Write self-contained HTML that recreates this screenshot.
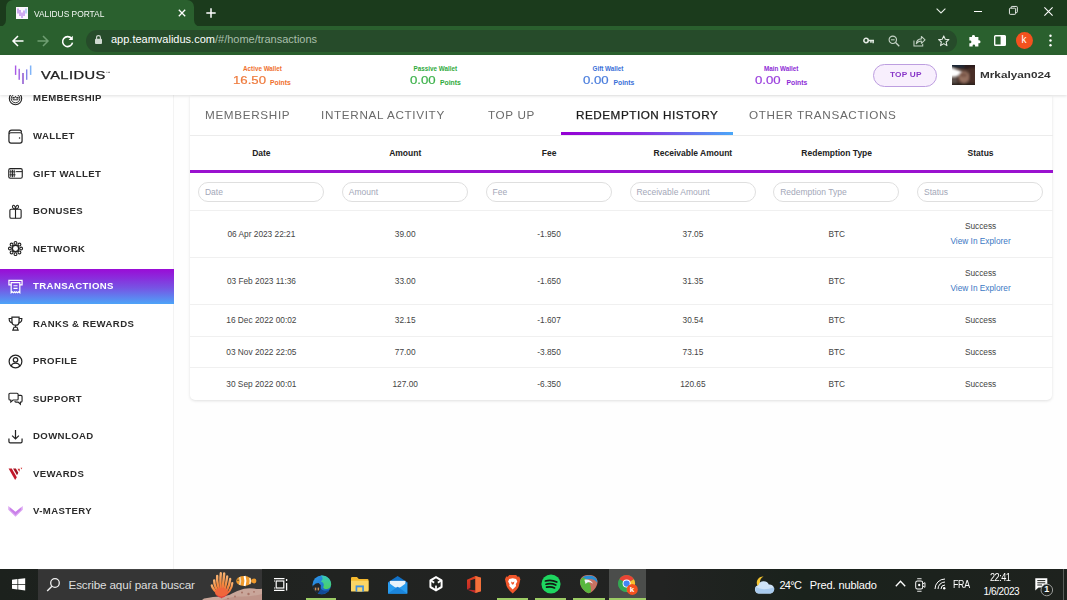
<!DOCTYPE html>
<html><head><meta charset="utf-8"><title>VALIDUS PORTAL</title>
<style>
*{box-sizing:border-box;margin:0;padding:0}
html,body{width:1067px;height:600px;overflow:hidden;background:#fefefe;font-family:"Liberation Sans",sans-serif;}
.abs{position:absolute}
#tabstrip{position:absolute;left:0;top:0;width:1067px;height:27px;background:#1b3b1c}
#tab{position:absolute;left:6px;top:0;width:188px;height:27px;background:#2a602e;border-radius:7px 7px 0 0}
#tab .t{position:absolute;left:28px;top:6px;font-size:10.5px;color:#fff;white-space:nowrap}
#toolbar{position:absolute;left:0;top:26px;width:1067px;height:29px;background:#2a602e}
#url{position:absolute;left:86px;top:3.500px;width:871px;height:22px;border-radius:11px;background:#264b2a}
#url .u{position:absolute;left:24px;top:3px;font-size:11.5px;color:#fff;white-space:nowrap}
#url .u span{color:#a9bfaa}
#apphead{position:absolute;left:0;top:55px;width:1067px;height:39.5px;background:#fff;box-shadow:0 1px 3px rgba(0,0,0,.13);z-index:5}
#side{position:absolute;left:0;top:55px;width:174px;height:514px;background:#fff;border-right:1px solid #f3f3f3}
.mi{position:absolute;left:0;width:174px;height:36px}
.mi .l{position:absolute;left:33px;top:12px;font-size:9px;font-weight:bold;letter-spacing:.9px;color:#2c2c2c;white-space:nowrap}
.mi.act{background:linear-gradient(180deg,#9a0cd6 0%,#8a2cdc 25%,#7655e4 55%,#4da4f8 100%)}
.mi.act .l{color:#fff}
#card{position:absolute;left:189.5px;top:96px;width:862.500px;height:303.5px;background:#fff;border-radius:0 0 5px 5px;box-shadow:0 1px 3px rgba(0,0,0,.12)}
#taskbar{position:absolute;left:0;top:569px;width:1067px;height:31px;background:#1f2420;z-index:9}

.mi{height:35px}
.mi .ic{position:absolute;left:7.8px;top:10px;width:15px;height:15px;overflow:visible}
.mi .l{top:12.5px}

.mi .l{font-size:9px;letter-spacing:.37px;transform:scaleX(1.065);transform-origin:0 50%}
.w{position:absolute;white-space:nowrap;font-weight:bold}
.wl{font-size:6.3px;top:9.5px;transform-origin:0 50%}
.wv{font-size:11px;top:19.3px;font-weight:normal;-webkit-text-stroke:.2px currentColor;transform-origin:0 50%;transform:scaleX(1.2)}
.wp{font-size:6.8px;top:24.4px}
#topup{position:absolute;left:873px;top:9px;width:64px;height:23px;border:1px solid #bd9ee0;border-radius:12px;background:#f8effd}
#topup span{position:absolute;left:16px;top:5px;font-size:7.5px;font-weight:bold;color:#8836c8;letter-spacing:.2px;white-space:nowrap;transform:scaleX(1.1);transform-origin:0 50%}
#ava{position:absolute;left:952px;top:10px;width:23px;height:20px}
#uname{position:absolute;left:980px;top:14px;font-size:9.8px;font-weight:bold;color:#333;white-space:nowrap;transform:scaleX(1.2);transform-origin:0 50%}
#logo{position:absolute;left:14px;top:10px;width:18px;height:20px}
#logot{position:absolute;left:41px;top:14.500px;font-size:10.2px;color:#222;letter-spacing:.3px;transform:scaleX(1.44);transform-origin:0 50%;white-space:nowrap;-webkit-text-stroke:.25px #222}

.tb{position:absolute;top:12.5px;font-size:10.7px;color:#6a6a6a;white-space:nowrap;letter-spacing:.6px;transform-origin:0 50%;transform:scaleX(1.095)}
.tb.on{color:#1c1c1c;-webkit-text-stroke:.25px #1c1c1c;letter-spacing:.48px}
#tul{position:absolute;left:371.3px;top:36px;width:172.5px;height:3px;background:linear-gradient(90deg,#9400d3 0%,#8a2be2 45%,#4aa8f8 100%)}
#tsep{position:absolute;left:0;top:39px;width:863px;height:1px;background:#ececec}
#thl{position:absolute;left:0;top:74px;width:863px;height:3px;background:#9a12cf}
.th{position:absolute;top:52px;width:143.8px;text-align:center;font-size:8.5px;font-weight:bold;color:#222;white-space:nowrap}
.fi{position:absolute;top:86px;width:126px;height:20px;border:1px solid #dfdfdf;border-radius:10px;background:#fff}
.fi span{position:absolute;left:5.800px;top:4px;font-size:8.5px;color:#a3a7b8;white-space:nowrap}
.hr{position:absolute;left:0;width:863px;height:1px;background:#f0f0f0}
.td{position:absolute;width:143.8px;text-align:center;font-size:8.3px;color:#444;margin-top:0;white-space:nowrap;line-height:10px}
.td a{color:#3b78c4;text-decoration:none}

#taskbar{background:linear-gradient(90deg,#1c211d 0%,#212321 30%,#222322 62%,#1a221c 75%,#1e221e 100%);top:569px;height:31px}
#tsearch{position:absolute;left:37.500px;top:0;width:224.500px;height:31px;background:#353535;overflow:hidden;box-shadow:inset 0 1px 0 #444}
#tsearch .tx{position:absolute;left:31px;top:8.5px;font-size:11.7px;color:#dedede;white-space:nowrap;letter-spacing:-.15px}
.ul{position:absolute;top:29px;height:2px;background:#9ccc65}
.tt{position:absolute;color:#fff;white-space:nowrap;font-size:11px}
.tsv{position:absolute;overflow:visible}

#tab .t{left:28px;top:7.5px;font-size:9.700px;transform:scaleX(.865);transform-origin:0 50%;color:#f4f8f4}
#url .u{left:25px;top:3.5px;font-size:11px}
.cv{position:absolute;overflow:visible}
</style></head>
<body>
<div id="tabstrip"><div id="tab">
<svg class="cv" style="left:-7px;top:20px" width="7" height="7" viewBox="0 0 7 7"><path d="M7 0 V7 H0 A7 7 0 0 0 7 0Z" fill="#2a602e"/></svg>
<svg class="cv" style="left:188px;top:20px" width="7" height="7" viewBox="0 0 7 7"><path d="M0 0 V7 H7 A7 7 0 0 1 0 0Z" fill="#2a602e"/></svg>
<svg class="cv" style="left:10px;top:7px" width="12" height="12" viewBox="0 0 12 12"><rect width="12" height="12" fill="#fbf8fe"/><path d="M2 1.500 V6.500 M4 3 V9 M6 5.500 V11 M8 3.500 V9" stroke="#9a4fe0" stroke-width=".9"/><path d="M10 1.500 V6.500" stroke="#6aa0f0" stroke-width=".9"/></svg>
<div class="t">VALIDUS PORTAL</div>
<svg class="cv" style="left:171.500px;top:9px" width="8" height="8" viewBox="0 0 8 8"><path d="M.8 .8 L7.200 7.200 M7.200 .8 L.8 7.200" stroke="#fff" stroke-width="1.300"/></svg>
</div>
<svg class="cv" style="left:205.500px;top:8px" width="10" height="10" viewBox="0 0 10 10"><path d="M5 .3 V9.700 M.3 5 H9.700" stroke="#fff" stroke-width="1.500"/></svg>
<svg class="cv" style="left:936px;top:8px" width="10" height="6" viewBox="0 0 10 6"><path d="M.6 .6 L5 5 L9.400 .6" fill="none" stroke="#e8efe8" stroke-width="1.100"/></svg>
<svg class="cv" style="left:973.500px;top:10.500px" width="8" height="1" viewBox="0 0 8 1"><rect width="8" height="1" fill="#fff"/></svg>
<svg class="cv" style="left:1008.500px;top:6.300px" width="8.800" height="8.800" viewBox="0 0 10 10"><rect x=".5" y="2.500" width="7" height="7" rx="1" fill="none" stroke="#fff" stroke-width="1"/><path d="M2.500 2.500 V1.500 Q2.500 .5 3.500 .5 H8.500 Q9.500 .5 9.500 1.500 V6.500 Q9.500 7.500 8.500 7.500 H7.500" fill="none" stroke="#fff" stroke-width="1"/></svg>
<svg class="cv" style="left:1044px;top:6.500px" width="9" height="9" viewBox="0 0 9 9"><path d="M.4 .4 L8.600 8.600 M8.600 .4 L.4 8.600" stroke="#fff" stroke-width="1.100"/></svg>
</div>
<div id="toolbar">
<svg class="cv" style="left:12px;top:9px" width="12" height="12" viewBox="0 0 12 12"><path d="M11.500 6 H1.500 M6 1 L1 6 L6 11" fill="none" stroke="#fff" stroke-width="1.500"/></svg>
<svg class="cv" style="left:37px;top:9px" width="12" height="12" viewBox="0 0 12 12"><path d="M.5 6 H10.500 M6 1 L11 6 L6 11" fill="none" stroke="#6f9e72" stroke-width="1.500"/></svg>
<svg class="cv" style="left:61px;top:8.500px" width="13" height="13" viewBox="0 0 13 13"><path d="M10.600 3.600 A5 5 0 1 0 11.500 7.600" fill="none" stroke="#fff" stroke-width="1.600"/><path d="M11.800 .8 V5 H7.600Z" fill="#fff"/></svg>
<div id="url">
<svg class="cv" style="left:9.200px;top:5.600px" width="7" height="9" viewBox="0 0 8 10"><rect x="0" y="4" width="8" height="6" rx="1" fill="#cfd8d0"/><path d="M1.800 4.500 V2.800 A2.200 2.200 0 0 1 6.200 2.800 V4.500" fill="none" stroke="#cfd8d0" stroke-width="1.300"/></svg>
<div class="u">app.teamvalidus.com<span>/#/home/transactions</span></div>
<svg class="cv" style="left:777px;top:7.500px" width="11.500" height="7" viewBox="0 0 13 8"><circle cx="3.400" cy="4" r="2.500" fill="none" stroke="#e4ebe4" stroke-width="1.800"/><path d="M6 4 H12.500 M11.500 4 V7 M9 4 V6.500" stroke="#e4ebe4" stroke-width="1.700"/></svg>
<svg class="cv" style="left:801.500px;top:5.500px" width="12" height="12" viewBox="0 0 13 13"><circle cx="5.200" cy="5.200" r="4" fill="none" stroke="#c6d4c7" stroke-width="1.200"/><path d="M8.200 8.200 L12.200 12.200" stroke="#c6d4c7" stroke-width="1.400"/><path d="M3.200 5.200 H7.200" stroke="#c6d4c7" stroke-width="1.100"/></svg>
<svg class="cv" style="left:826.500px;top:5px" width="13" height="12" viewBox="0 0 14 13"><path d="M1 6 V12 H10.500 V9.500" fill="none" stroke="#c6d4c7" stroke-width="1.100"/><path d="M3.500 9.500 Q4 4.500 9 4.200 V1.500 L13 5.300 L9 9 V6.400 Q5.500 6.400 3.500 9.500Z" fill="none" stroke="#c6d4c7" stroke-width="1.100" stroke-linejoin="round"/></svg>
<svg class="cv" style="left:852px;top:5.500px" width="11.500" height="11.500" viewBox="0 0 13 13"><path d="M6.500 1 L8.200 4.800 L12.300 5.200 L9.200 7.900 L10.100 12 L6.500 9.800 L2.900 12 L3.800 7.900 L.7 5.200 L4.800 4.800Z" fill="none" stroke="#e4ebe4" stroke-width="1.200" stroke-linejoin="round"/></svg>
</div>
<svg class="cv" style="left:969px;top:8.500px" width="11.500" height="11.500" viewBox="0 0 13 13"><path d="M5 0 Q6.800 0 6.800 1.600 V2.400 H10.600 V6 H11.400 Q13 6 13 7.700 Q13 9.400 11.400 9.400 H10.600 V13 H6.900 V12 Q6.900 10.600 5.500 10.600 Q4.100 10.600 4.100 12 V13 H.4 V9.300 H1.300 Q2.700 9.300 2.700 7.800 Q2.700 6.300 1.300 6.300 H.4 V2.400 H3.300 V1.600 Q3.300 0 5 0Z" fill="#fff"/></svg>
<svg class="cv" style="left:994px;top:9px" width="12" height="11" viewBox="0 0 12 11"><rect x=".7" y=".7" width="10.600" height="9.600" rx=".8" fill="none" stroke="#fff" stroke-width="1.400"/><rect x="6.600" y=".7" width="4.700" height="9.600" fill="#fff"/></svg>
<div class="abs" style="left:1015.700px;top:5.500px;width:17.600px;height:17.600px;border-radius:50%;background:#f4511e"></div>
<div class="abs" style="left:1021.500px;top:8px;font-size:10px;color:#fff">k</div>
<svg class="cv" style="left:1049px;top:8px" width="3" height="13" viewBox="0 0 3 13"><circle cx="1.500" cy="1.800" r="1.200" fill="#fff"/><circle cx="1.500" cy="6.500" r="1.200" fill="#fff"/><circle cx="1.500" cy="11.200" r="1.200" fill="#fff"/></svg>
</div>
<div id="side">
<div class="mi" style="top:25.5px"><svg class="ic" viewBox="0 0 16 16"><circle cx="8" cy="8" r="6.6" fill="none" stroke="#222" stroke-width="1.2"/><circle cx="8" cy="8" r="4.6" fill="none" stroke="#222" stroke-width="1"/><path d="M5.6 9.4 L5.2 6.4 L6.9 7.6 L8 5.6 L9.1 7.6 L10.8 6.4 L10.4 9.4 Z" fill="none" stroke="#222" stroke-width="1"/></svg><div class="l">MEMBERSHIP</div></div>
<div class="mi" style="top:63.5px"><svg class="ic" viewBox="0 0 16 16"><path d="M1 5 Q1 1.200 4 1.200 H12.200 Q14.300 1.200 14.300 3.200 V4" fill="none" stroke="#222" stroke-width="1.300"/><rect x="1" y="4" width="14" height="11" rx="2.200" fill="none" stroke="#222" stroke-width="1.300"/><circle cx="12.300" cy="9.600" r=".8" fill="#222"/></svg><div class="l">WALLET</div></div>
<div class="mi" style="top:101.0px"><svg class="ic" viewBox="0 0 16 16"><rect x=".8" y="2.8" width="14.4" height="10.2" rx="1.6" fill="none" stroke="#222" stroke-width="1.2"/><path d="M8.6 6 H15" stroke="#222" stroke-width="1.1"/><path d="M1.6 6.2 H8 M1.6 9.4 H8 M3 4 V12 M4.8 4 V12 M6.6 4 V12" stroke="#222" stroke-width="1"/></svg><div class="l">GIFT WALLET</div></div>
<div class="mi" style="top:138.5px"><svg class="ic" viewBox="0 0 16 16"><rect x="2" y="5.6" width="12" height="9.6" rx="1.4" fill="none" stroke="#222" stroke-width="1.2"/><path d="M8 5.6 V15.2" stroke="#222" stroke-width="1.2"/><path d="M8 5.4 C5.2 5.2 4.2 3.4 5 2 C6 .6 7.8 1.8 8 5.4 C8.2 1.8 10 .6 11 2 C11.8 3.4 10.8 5.2 8 5.4Z" fill="none" stroke="#222" stroke-width="1.1"/></svg><div class="l">BONUSES</div></div>
<div class="mi" style="top:176.0px"><svg class="ic" viewBox="0 0 16 16"><circle cx="8" cy="8" r="3.4" fill="none" stroke="#222" stroke-width="1.5"/><g fill="#fff" stroke="#222" stroke-width="1.2"><circle cx="8" cy="2" r="1.5"/><circle cx="8" cy="14" r="1.5"/><circle cx="2" cy="8" r="1.5"/><circle cx="14" cy="8" r="1.5"/><circle cx="3.8" cy="3.8" r="1.5"/><circle cx="12.2" cy="3.8" r="1.5"/><circle cx="3.8" cy="12.2" r="1.5"/><circle cx="12.2" cy="12.2" r="1.5"/></g></svg><div class="l">NETWORK</div></div>
<div class="mi act" style="top:213.5px"><svg class="ic" viewBox="0 0 16 16"><path d="M3.4 6.2 H1 V1.4 H15 V6.2 H12.6" fill="none" stroke="#fff" stroke-width="1.3"/><path d="M3.4 3.8 H12.6 V14.6 L11.4 13.6 L10.2 14.6 L9 13.6 L8 14.6 L7 13.6 L5.8 14.6 L4.6 13.6 L3.4 14.6 Z" fill="none" stroke="#fff" stroke-width="1.3"/><path d="M5.8 7.2 H10.2 M5.8 10 H10.2" stroke="#fff" stroke-width="1.3"/></svg><div class="l">TRANSACTIONS</div></div>
<div class="mi" style="top:251.0px"><svg class="ic" viewBox="0 0 16 16"><path d="M4.2 1.2 H11.8 V6 Q11.8 9.8 8 9.8 Q4.2 9.8 4.2 6 Z" fill="none" stroke="#222" stroke-width="1.3"/><path d="M4.2 2.6 H1.2 Q1.2 7 4.8 7.4 M11.8 2.6 H14.8 Q14.8 7 11.2 7.4" fill="none" stroke="#222" stroke-width="1.2"/><path d="M8 9.8 V12" stroke="#222" stroke-width="1.3"/><path d="M5.2 15 L6.4 12 H9.6 L10.8 15 Z" fill="none" stroke="#222" stroke-width="1.2"/></svg><div class="l">RANKS & REWARDS</div></div>
<div class="mi" style="top:288.5px"><svg class="ic" viewBox="0 0 16 16"><circle cx="8" cy="8" r="6.8" fill="none" stroke="#222" stroke-width="1.3"/><circle cx="8" cy="6.2" r="2.4" fill="none" stroke="#222" stroke-width="1.3"/><path d="M3.6 13 Q4 9.8 8 9.8 Q12 9.8 12.4 13" fill="none" stroke="#222" stroke-width="1.3"/></svg><div class="l">PROFILE</div></div>
<div class="mi" style="top:326.0px"><svg class="ic" viewBox="0 0 16 16"><path d="M1 3.6 Q1 2.4 2.2 2.4 H9.6 Q10.8 2.4 10.8 3.6 V8.4 Q10.8 9.6 9.6 9.6 H5.4 L3 11.8 V9.6 H2.2 Q1 9.6 1 8.4 Z" fill="none" stroke="#222" stroke-width="1.2"/><path d="M10.8 4.6 H13.8 Q15 4.6 15 5.8 V10.6 Q15 11.8 13.8 11.8 H13.2 V14 L10.8 11.8 H8.4 Q7.4 11.8 7.2 10.8" fill="none" stroke="#222" stroke-width="1.2"/></svg><div class="l">SUPPORT</div></div>
<div class="mi" style="top:363.5px"><svg class="ic" viewBox="0 0 16 16"><path d="M8 1 V10.4 M4.4 7 L8 10.6 L11.6 7" fill="none" stroke="#222" stroke-width="1.3"/><path d="M1 10 V13.4 Q1 14.8 2.4 14.8 H13.6 Q15 14.8 15 13.4 V10" fill="none" stroke="#222" stroke-width="1.3"/></svg><div class="l">DOWNLOAD</div></div>
<div class="mi" style="top:401.0px"><svg class="ic" viewBox="0 0 16 16"><path d="M.6 2.6 L4 2.6 L9.4 12 L7.6 15 Z" fill="#c2182b"/><path d="M5.4 2.6 L8.4 2.6 L11 7.2 L9.6 9.8 Z" fill="#a01322"/><path d="M10.2 2.8 L12.6 2.8 L12.4 6 L11.4 5 Z" fill="#d32f2f"/><path d="M13.4 1.8 L15.2 1.8 L14.4 3.8 Z" fill="#d32f2f"/></svg><div class="l">VEWARDS</div></div>
<div class="mi" style="top:438.5px"><svg class="ic" viewBox="0 0 16 16"><path d="M.3 2.200 L8 8.300 L15.700 2.200 L15.700 6.200 L8 13.500 L.3 6.200Z" fill="#dba6f2"/><path d="M2.200 3.800 L8 8.600 L13.800 3.800 L13.800 6.400 L8 11.800 L2.200 6.400Z" fill="#c77ae8" opacity=".85"/></svg><div class="l">V-MASTERY</div></div>
</div>
<div id="apphead">
<svg id="logo" viewBox="0 0 18 20"><defs><linearGradient id="lg" x1="0" y1="0" x2="1" y2="1"><stop offset="0" stop-color="#a64de8"/><stop offset="1" stop-color="#5aa6f5"/></linearGradient></defs>
<rect x=".9" y=".5" width="1.400" height="9.400" fill="#a95ae6"/><rect x="4.500" y="3.800" width="1.400" height="11" fill="#a060e4"/><rect x="8.300" y="8" width="1.400" height="11" fill="#8448cc"/><rect x="12" y="4.400" width="1.400" height="10.400" fill="#8484ec"/><rect x="15.900" y=".5" width="1.500" height="9.400" fill="#7fb4f8"/></svg>
<div id="logot">VALIDUS<span style="font-size:3.500px;vertical-align:top;position:relative;top:1.500px;-webkit-text-stroke:0">™</span></div>
<div class="w wl" style="left:243px;color:#f0702e">Active Wallet</div><div class="w wv" style="left:233px;color:#ee7a3c">16.50</div><div class="w wp" style="left:270px;color:#f0702e">Points</div>
<div class="w wl" style="left:413.5px;color:#2eaa3c">Passive Wallet</div><div class="w wv" style="left:409.5px;color:#3cb14a">0.00</div><div class="w wp" style="left:440px;color:#2eaa3c">Points</div>
<div class="w wl" style="left:592.5px;color:#3a6fd8">Gift Wallet</div><div class="w wv" style="left:582.5px;color:#4a7ddc">0.00</div><div class="w wp" style="left:613.5px;color:#3a6fd8">Points</div>
<div class="w wl" style="left:764px;color:#8d2bd6">Main Wallet</div><div class="w wv" style="left:755px;color:#9a3fdc">0.00</div><div class="w wp" style="left:786.5px;color:#8d2bd6">Points</div>
<div id="topup"><span>TOP UP</span></div>
<svg id="ava" viewBox="0 0 23 20" preserveAspectRatio="none"><defs><filter id="bl" x="-20%" y="-20%" width="140%" height="140%"><feGaussianBlur stdDeviation="1.1"/></filter><clipPath id="avc"><rect width="23" height="20"/></clipPath></defs><g clip-path="url(#avc)"><rect width="23" height="20" fill="#4a342c"/><g filter="url(#bl)"><rect x="-2" y="-2" width="27" height="5" fill="#1c2836"/><rect x="12" y="-2" width="13" height="6" fill="#2a1c1c"/><path d="M-2 2.500 L10 6.500 L5 11.500 L-2 12Z" fill="#ffffff"/><path d="M-2 3 L7 6 L3 10 L-2 10.500Z" fill="#ffffff"/><ellipse cx="12" cy="12" rx="5.500" ry="6" fill="#94705e"/><ellipse cx="11.500" cy="10" rx="3.500" ry="2" fill="#7a5648"/><rect x="17" y="3" width="8" height="16" fill="#4a2e28"/><rect x="-2" y="13" width="7" height="6" fill="#5a5048"/><rect x="-2" y="18" width="27" height="4" fill="#2c201c"/></g></g></svg>
<div id="uname">Mrkalyan024</div>
</div>
<div id="card">
<div class="tb" style="left:15.5px">MEMBERSHIP</div><div class="tb" style="left:131.5px">INTERNAL ACTIVITY</div><div class="tb" style="left:298.3px">TOP UP</div><div class="tb on" style="left:386.3px">REDEMPTION HISTORY</div><div class="tb" style="left:559.0px">OTHER TRANSACTIONS</div>
<div id="tul"></div><div id="tsep"></div>
<div class="th" style="left:0.0px">Date</div><div class="th" style="left:143.8px">Amount</div><div class="th" style="left:287.7px">Fee</div><div class="th" style="left:431.5px">Receivable Amount</div><div class="th" style="left:575.3px">Redemption Type</div><div class="th" style="left:719.2px">Status</div>
<div id="thl"></div>
<div class="fi" style="left:8.7px"><span>Date</span></div><div class="fi" style="left:152.5px"><span>Amount</span></div><div class="fi" style="left:296.3px"><span>Fee</span></div><div class="fi" style="left:440.1px"><span>Receivable Amount</span></div><div class="fi" style="left:583.9px"><span>Redemption Type</span></div><div class="fi" style="left:727.7px"><span>Status</span></div>
<div class="hr" style="top:114px"></div>
<div class="td" style="left:0.0px;top:133px">06 Apr 2023 22:21</div><div class="td" style="left:143.8px;top:133px">39.00</div><div class="td" style="left:287.7px;top:133px">-1.950</div><div class="td" style="left:431.5px;top:133px">37.05</div><div class="td" style="left:575.3px;top:133px">BTC</div><div class="td" style="left:719.2px;top:125.4px">Success</div><div class="td" style="left:719.2px;top:140.3px"><a>View In Explorer</a></div><div class="hr" style="top:161.0px"></div>
<div class="td" style="left:0.0px;top:180px">03 Feb 2023 11:36</div><div class="td" style="left:143.8px;top:180px">33.00</div><div class="td" style="left:287.7px;top:180px">-1.650</div><div class="td" style="left:431.5px;top:180px">31.35</div><div class="td" style="left:575.3px;top:180px">BTC</div><div class="td" style="left:719.2px;top:172.4px">Success</div><div class="td" style="left:719.2px;top:187.3px"><a>View In Explorer</a></div><div class="hr" style="top:208.0px"></div>
<div class="td" style="left:0.0px;top:219px">16 Dec 2022 00:02</div><div class="td" style="left:143.8px;top:219px">32.15</div><div class="td" style="left:287.7px;top:219px">-1.607</div><div class="td" style="left:431.5px;top:219px">30.54</div><div class="td" style="left:575.3px;top:219px">BTC</div><div class="td" style="left:719.2px;top:219px">Success</div><div class="hr" style="top:240.0px"></div>
<div class="td" style="left:0.0px;top:251px">03 Nov 2022 22:05</div><div class="td" style="left:143.8px;top:251px">77.00</div><div class="td" style="left:287.7px;top:251px">-3.850</div><div class="td" style="left:431.5px;top:251px">73.15</div><div class="td" style="left:575.3px;top:251px">BTC</div><div class="td" style="left:719.2px;top:251px">Success</div><div class="hr" style="top:270.8px"></div>
<div class="td" style="left:0.0px;top:283px">30 Sep 2022 00:01</div><div class="td" style="left:143.8px;top:283px">127.00</div><div class="td" style="left:287.7px;top:283px">-6.350</div><div class="td" style="left:431.5px;top:283px">120.65</div><div class="td" style="left:575.3px;top:283px">BTC</div><div class="td" style="left:719.2px;top:283px">Success</div>
</div>
<div id="taskbar">
<svg class="tsv" style="left:12.200px;top:8.800px" width="13.200" height="12.600" viewBox="0 0 14 13"><path d="M0 1.8 L5.8 1 V6.1 H0Z M6.6 .9 L14 0 V6.1 H6.6Z M0 6.9 H5.8 V12 L0 11.2Z M6.6 6.9 H14 V13 L6.6 12.1Z" fill="#fff"/></svg>
<div id="tsearch">
<svg class="tsv" style="left:8px;top:8px" width="15" height="15" viewBox="0 0 15 15"><circle cx="9" cy="6" r="4.3" fill="none" stroke="#f0f0f0" stroke-width="1.3"/><path d="M5.9 9.2 L1.2 13.9" stroke="#f0f0f0" stroke-width="1.4"/></svg>
<div class="tx">Escribe aquí para buscar</div>
<svg class="tsv" style="left:170px;top:0" width="54" height="31" viewBox="0 0 54 31"><defs><linearGradient id="cg" x1="0" y1="0" x2="0" y2="1"><stop offset="0" stop-color="#f7b070"/><stop offset=".45" stop-color="#f58a3e"/><stop offset="1" stop-color="#e6483c"/></linearGradient></defs>
<path d="M-6 31 L-4 29.500 Q6 27.500 12 27.500 Q20 27 24 24.500 Q30 21.500 36 19.800 Q41 18.600 46 19.600 Q50 20.500 54 19.800 V31Z" fill="#c9a69a"/>
<path d="M14 31 Q24 27 32 27.500 Q42 28 54 25 V31Z" fill="#bf958a"/>
<g fill="#a87366"><circle cx="34" cy="23.500" r="1"/><circle cx="40.500" cy="25" r="1.200"/><circle cx="46" cy="22.800" r=".9"/><circle cx="27" cy="27.500" r=".9"/><circle cx="13.500" cy="28.800" r=".8"/><circle cx="20" cy="29.500" r=".8"/></g>
<g fill="none" stroke="url(#cg)" stroke-linecap="round" gradientUnits="userSpaceOnUse">
<path d="M13.500 27 C9 24 4.500 21 3.800 16.500" stroke-width="2.300"/>
<path d="M13.500 27 C9 22 6 17 6.200 11.500" stroke-width="2.400"/>
<path d="M13.500 27 C10.500 20 8.500 13 9.200 7" stroke-width="2.400"/>
<path d="M13.500 27 C12.500 19 12 11 12.800 4.300" stroke-width="2.400"/>
<path d="M13.500 27 C15 19 15.500 11 16.200 4.500" stroke-width="2.400"/>
<path d="M13.500 27 C17.500 21 18.500 13 19.200 7.500" stroke-width="2.300"/>
<path d="M13.500 27 C19.500 23 21.500 16 22.200 10" stroke-width="2.300"/>
<path d="M13.500 27 C21 25 24 19 24.300 14" stroke-width="2.200"/>
</g>
<ellipse cx="13.500" cy="23.500" rx="6.500" ry="4.500" fill="#f0663c"/>
<path d="M8 25 Q13.500 30.500 19 25 Q17 28.800 13.500 28.800 Q10 28.800 8 25Z" fill="#e23a3e"/>
<ellipse cx="36" cy="12" rx="7.800" ry="5" fill="#f09a2c"/><circle cx="46" cy="12" r="2.400" fill="#f09a2c"/><path d="M43 12 L45 10.800 V13.200Z" fill="#f09a2c"/>
<path d="M31.800 8 Q33.200 12 31.800 16" stroke="#e8d8c0" stroke-width="1.500" fill="none"/><path d="M36.600 7 Q38.200 12 36.600 17" stroke="#fff" stroke-width="2" fill="none"/><path d="M41.800 9 Q42.800 12 41.800 15" stroke="#f4efe6" stroke-width="1.300" fill="none"/>
<circle cx="30" cy="11.300" r=".7" fill="#332"/>
</svg>
</div>
<svg class="tsv" style="left:274px;top:8.5px" width="14" height="13" viewBox="0 0 14 13"><rect x="2.2" y="3" width="7.6" height="7" fill="none" stroke="#fff" stroke-width="1.2"/><path d="M0 3 H1 M0 10 H1 M0 .7 H10.5 M0 12.3 H10.5" stroke="#fff" stroke-width="1.2"/><path d="M12.6 1 V3 M12.6 5 V12.5" stroke="#fff" stroke-width="1.3"/></svg>
<svg class="tsv" style="left:311.500px;top:5.500px" width="19.600" height="19.600" viewBox="0 0 21 21"><defs><linearGradient id="eg1" x1="0" y1="0" x2="1" y2="1"><stop offset="0" stop-color="#2f9cf0"/><stop offset="1" stop-color="#155bb0"/></linearGradient><linearGradient id="eg2" x1="0" y1="0" x2="0" y2="1"><stop offset="0" stop-color="#35c8c0"/><stop offset="1" stop-color="#4ccf60"/></linearGradient></defs><circle cx="10.500" cy="10.500" r="10" fill="url(#eg1)"/><path d="M9 .6 C16 -.5 21 5 20.500 10.500 C20.200 13.500 18 15 15.500 15 C13 15 11.500 13.800 12.200 12.500 C13.500 10 12 7.500 9.500 7.200 C12 5 12 2 9 .6Z" fill="url(#eg2)"/><path d="M2 14 C3 18 6.500 20.500 10.500 20.500 C14 20.500 17 18.500 18.500 16 C14 18 9 16 8.500 12 Z" fill="#134a96"/><path d="M.5 12 L4 9 L7 8.500 L9.500 11 L9 15.500 L6 20 L2.500 17Z" fill="#22262a"/><rect x="3" y="13.500" width="1.600" height="3" fill="#c8905a"/><rect x="6" y="13.500" width="1.600" height="3" fill="#c8905a"/></svg>
<div class="ul" style="left:305.5px;width:30.5px"></div>
<svg class="tsv" style="left:350.600px;top:7.500px" width="17.500" height="15" viewBox="0 0 19 16" preserveAspectRatio="none"><path d="M0 1.2 Q0 0 1.2 0 H6.5 L8.5 2 H17.8 Q19 2 19 3.2 V14 H0Z" fill="#f5b92e"/><path d="M0 4 H19 V14.8 Q19 15.5 18 15.5 H1 Q0 15.5 0 14.8Z" fill="#fbd565"/><rect x="5" y="9" width="9" height="6.5" fill="#3e8ede"/><rect x="6.8" y="11" width="5.4" height="4.5" fill="#fbd565"/></svg>
<svg class="tsv" style="left:388px;top:6.500px" width="19.300" height="17.500" viewBox="0 0 21 18" preserveAspectRatio="none"><path d="M0 6.5 L10.5 0 L21 6.5 V18 H0Z" fill="#1272c8"/><path d="M2 5 H19 V12 H2Z" fill="#e9f3fb"/><path d="M0 6.5 L10.5 13.5 L21 6.5 V18 H0Z" fill="#2a9df0"/><path d="M0 18 L10.5 11 L21 18Z" fill="#1b85dc"/></svg>
<svg class="tsv" style="left:428.800px;top:7.400px" width="14" height="15.500" viewBox="0 0 18 18" preserveAspectRatio="none"><path d="M9 1.300 L16.200 5.200 V12.800 L9 16.700 L1.800 12.800 V5.200Z" fill="none" stroke="#fff" stroke-width="2.500" stroke-linejoin="round"/><path d="M9 9 V16 M9 9 L3 5.600 M9 9 L15 5.600" stroke="#fff" stroke-width="2.200"/><circle cx="9" cy="8.600" r="2.600" fill="#1c211d"/></svg>
<svg class="tsv" style="left:467px;top:6.700px" width="14" height="17" viewBox="0 0 15 18" preserveAspectRatio="none"><defs><linearGradient id="og" x1="0" y1="0" x2="0" y2="1"><stop offset="0" stop-color="#e2401e"/><stop offset="1" stop-color="#b8242c"/></linearGradient></defs><path d="M0 4 L9 0 L15 1.8 V16.2 L9 18 L0 14.2 L9 15 V3 L3.6 4.6 V12.6 L0 14.2Z" fill="url(#og)"/><path d="M9 0 L15 1.8 V16.2 L9 18Z" fill="#f2703a"/></svg>
<svg class="tsv" style="left:505px;top:5.800px" width="15.400" height="18.500" viewBox="0 0 18 20" preserveAspectRatio="none"><path d="M3.2 1.8 L5 0 H13 L14.8 1.8 L16.6 1.6 L18 4.6 L16.2 12 Q15 15.4 9 20 Q3 15.4 1.8 12 L0 4.6 L1.4 1.6Z" fill="#f1562b"/><path d="M5 4.2 L9 3.4 L13 4.2 L14.4 7 L12.6 10 L13 12 L9 15.8 L5 12 L5.4 10 L3.6 7Z" fill="#fff"/><path d="M7 7 L9 8.2 L11 7 L10.2 9.8 L9 10.6 L7.8 9.8Z" fill="#f1562b"/></svg>
<div class="ul" style="left:496.5px;width:31.5px"></div>
<svg class="tsv" style="left:541px;top:4.5px" width="20" height="20" viewBox="0 0 20 20"><circle cx="10" cy="10" r="9.6" fill="#1ed760"/><path d="M4.4 7 Q10 5.2 15.8 8 M5 10.2 Q10 8.8 14.8 11 M5.6 13.2 Q10 12.2 13.6 13.9" fill="none" stroke="#121a14" stroke-width="1.7" stroke-linecap="round"/></svg>
<div class="ul" style="left:535px;width:31px"></div>
<svg class="tsv" style="left:579.800px;top:6px" width="17.500" height="18.300" viewBox="0 0 20 21" preserveAspectRatio="none"><path d="M10 0 C15 0 20 2 20 8 C20 14 14 20 10 21 C6 20 0 14 0 8 C0 2 5 0 10 0Z" fill="#c87362"/><path d="M3 3 C6 0 14 -.5 18 3.500 C19.500 5 20 7 19.800 9 C17 4.500 11 3.500 6 6Z" fill="#2b8fd2"/><path d="M3.500 3 C9 5 13.500 11 12.500 19.500 C11.500 20.300 10.800 20.700 10 21 C6 20 0 14 0 8 C0 5.800 1.500 4 3.500 3Z" fill="#58b73e"/><path d="M5 5.500 C9 4.500 13.500 6.500 15 10 C11 7.500 8 8 6.500 10.500 C6 9 5.500 7.500 5 5.500Z" fill="#f1f4f6"/></svg>
<div class="ul" style="left:573px;width:31.5px"></div>
<div style="position:absolute;left:608.5px;top:0;width:37.5px;height:31px;background:#4b4d4b"></div>
<svg class="tsv" style="left:617.500px;top:6px" width="20" height="21" viewBox="0 0 20 21"><circle cx="8.600" cy="8.600" r="8.500" fill="#34a853"/><path d="M8.600 8.600 L1.240 4.350 A8.500 8.500 0 0 1 15.960 4.350Z" fill="#ea4335"/><path d="M8.600 8.600 L15.960 4.350 A8.500 8.500 0 0 1 8.600 17.100Z" fill="#fbc02d"/><path d="M8.600 8.600 L8.600 17.100 A8.500 8.500 0 0 1 1.240 4.350Z" fill="#34a853"/><circle cx="8.600" cy="8.600" r="4" fill="#fff"/><circle cx="8.600" cy="8.600" r="3.100" fill="#4285f4"/><circle cx="14.300" cy="14.400" r="5.500" fill="#f4511e"/></svg>
<div class="tt" style="left:629.800px;top:15.500px;font-size:8px;font-weight:bold">k</div>
<div class="ul" style="left:608.5px;width:37.5px"></div>
<svg class="tsv" style="left:753.5px;top:6.5px" width="21" height="18" viewBox="0 0 21 18"><path d="M9.6 .6 A6.200 6.200 0 1 0 13.500 11 A5.200 5.200 0 0 1 9.600 .6Z" fill="#f4c430"/><path d="M4.600 17.500 A4.200 4.200 0 0 1 4.400 9.200 A5.600 5.600 0 0 1 14.800 8.600 A4.500 4.500 0 0 1 16.400 17.500Z" fill="#cfe3f7"/><path d="M4.600 17.500 A4.200 4.200 0 0 1 2 11 Q8 15 20 11.500 A4.500 4.500 0 0 1 16.400 17.500Z" fill="#a9cbee"/></svg>
<div class="tt" style="left:779.500px;top:9.500px;font-size:11px;letter-spacing:-.75px">24°C</div>
<div class="tt" style="left:809.700px;top:9.500px;font-size:11px;letter-spacing:-.1px">Pred. nublado</div>
<svg class="tsv" style="left:895px;top:11px" width="11" height="7" viewBox="0 0 11 7"><path d="M.8 6.200 L5.500 1.200 L10.200 6.200" fill="none" stroke="#fff" stroke-width="1.300"/></svg>
<svg class="tsv" style="left:914.500px;top:8.500px" width="10.500" height="14" viewBox="0 0 12 15" preserveAspectRatio="none"><rect x=".8" y="3.200" width="8" height="8.600" rx="2" fill="none" stroke="#fff" stroke-width="1.100"/><path d="M8.800 6.400 L11.400 5 V10 L8.800 8.600" fill="none" stroke="#fff" stroke-width="1"/><path d="M2.500 .8 H7.500 M2.500 14.200 H7.500" stroke="#fff" stroke-width="1"/><circle cx="4.800" cy="7.500" r="1.300" fill="#fff"/></svg>
<svg class="tsv" style="left:933.5px;top:9px" width="12" height="12" viewBox="0 0 12 12"><path d="M1 11 A10 10 0 0 1 11 1" fill="none" stroke="#fff" stroke-width="1"/><path d="M4 11 A7 7 0 0 1 11 4" fill="none" stroke="#fff" stroke-width="1"/><path d="M7 11 A4 4 0 0 1 11 7" fill="none" stroke="#fff" stroke-width="1"/><circle cx="10.200" cy="10.200" r="1.200" fill="#fff"/></svg>
<div class="tt" style="left:953px;top:9.500px;font-size:10px;letter-spacing:-.3px;transform:scaleX(.88);transform-origin:0 50%">FRA</div>
<div class="tt" style="left:989.500px;top:2.800px;font-size:10px;letter-spacing:-.6px;transform:scaleX(.92);transform-origin:0 50%">22:41</div>
<div class="tt" style="left:983.500px;top:17px;font-size:10px;letter-spacing:-.4px">1/6/2023</div>
<svg class="tsv" style="left:1035px;top:9.500px" width="19" height="17" viewBox="0 0 19 17"><path d="M.3 -.8 H12.300 V8.600 H3.500 L.3 11.600Z" fill="#fff"/><path d="M2.300 1.600 H10.300 M2.300 3.800 H10.300 M2.300 6 H7" stroke="#1e221e" stroke-width="1"/><circle cx="11.800" cy="11" r="5.800" fill="#1e221e" stroke="#9a9c9a" stroke-width="1"/></svg>
<div class="tt" style="left:1044.300px;top:15px;font-size:9px;font-weight:bold">1</div>
<div style="position:absolute;left:1063px;top:0;width:1px;height:31px;background:#5a5e5a"></div>
</div>
</body></html>
